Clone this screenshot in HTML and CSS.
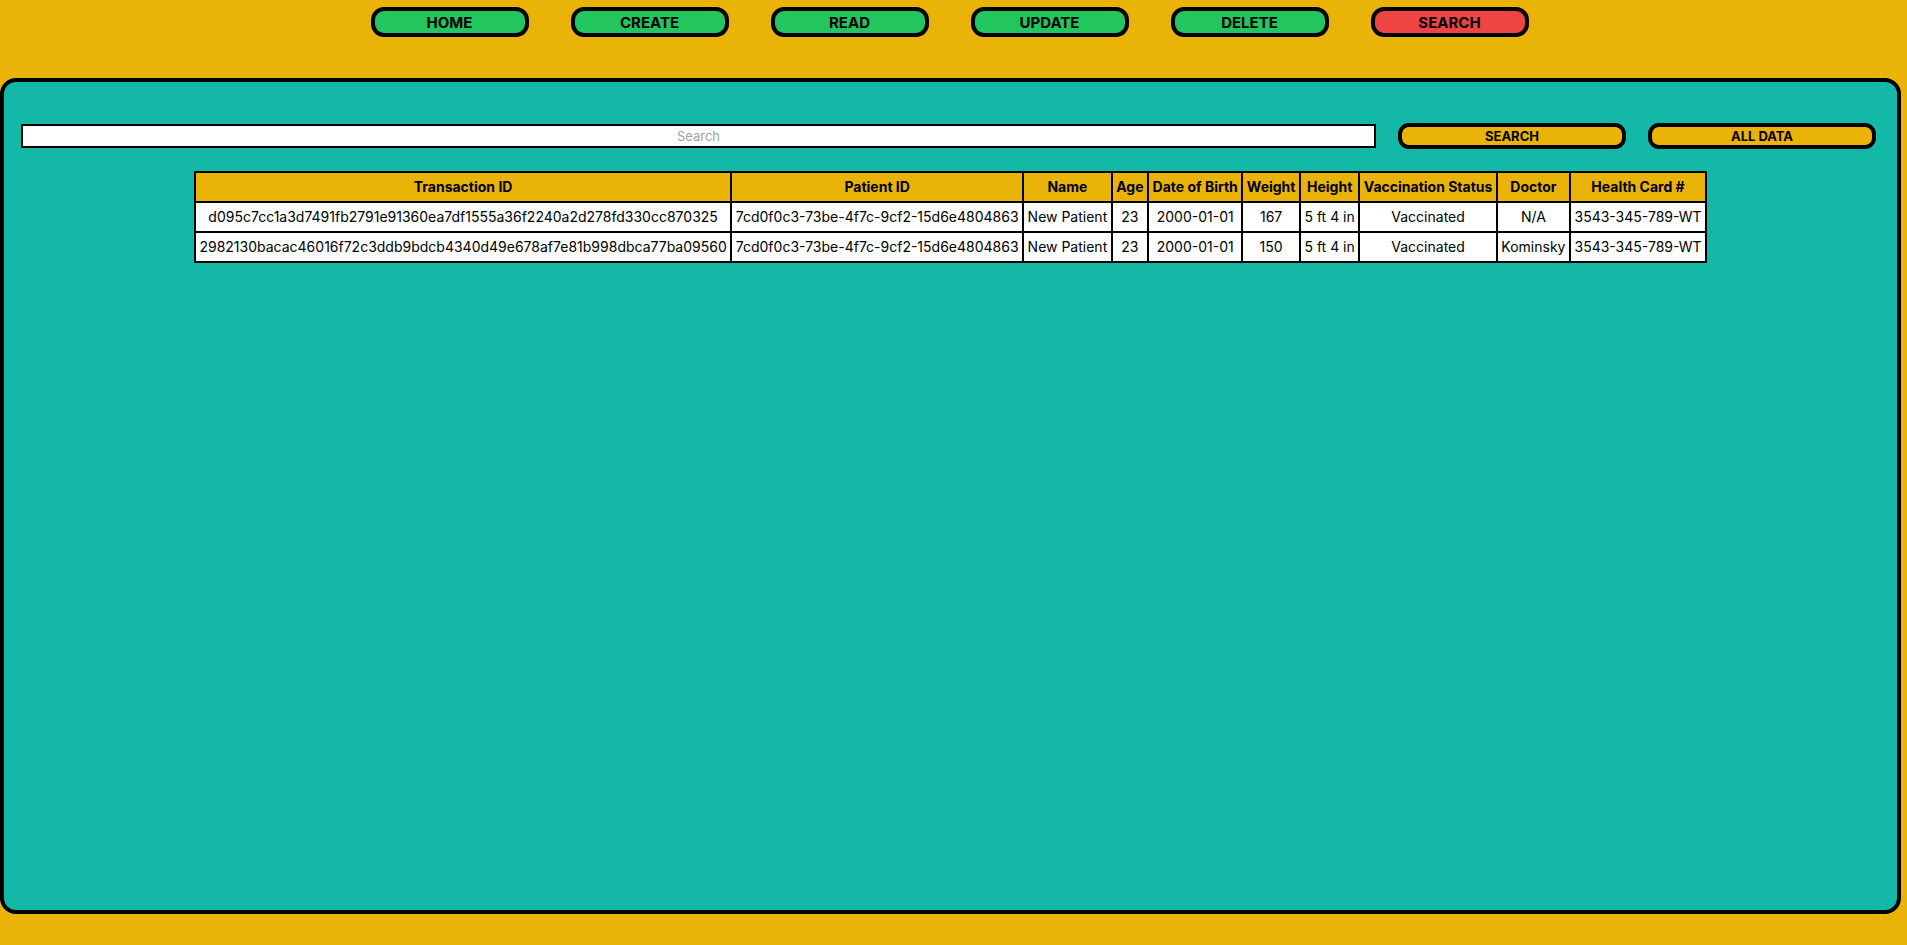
FILE: index.html
```html
<!DOCTYPE html>
<html lang="en">
<head>
<meta charset="utf-8">
<title>Search</title>
<link rel="stylesheet" href="styles.css">
</head>
<body>
<nav class="nav">
  <button class="nav-btn">HOME</button>
  <button class="nav-btn">CREATE</button>
  <button class="nav-btn">READ</button>
  <button class="nav-btn">UPDATE</button>
  <button class="nav-btn">DELETE</button>
  <button class="nav-btn nav-btn-active">SEARCH</button>
</nav>
<main class="panel">
  <div class="search-row">
    <input class="search-input" type="text" placeholder="Search">
    <button class="action-btn">SEARCH</button>
    <button class="action-btn">ALL DATA</button>
  </div>
  <table class="data-table">
    <thead>
      <tr>
        <th>Transaction ID</th>
        <th>Patient ID</th>
        <th>Name</th>
        <th>Age</th>
        <th>Date of Birth</th>
        <th>Weight</th>
        <th>Height</th>
        <th>Vaccination Status</th>
        <th>Doctor</th>
        <th>Health Card #</th>
      </tr>
    </thead>
    <tbody>
      <tr>
        <td>d095c7cc1a3d7491fb2791e91360ea7df1555a36f2240a2d278fd330cc870325</td>
        <td>7cd0f0c3-73be-4f7c-9cf2-15d6e4804863</td>
        <td>New Patient</td>
        <td>23</td>
        <td>2000-01-01</td>
        <td>167</td>
        <td>5 ft 4 in</td>
        <td>Vaccinated</td>
        <td>N/A</td>
        <td>3543-345-789-WT</td>
      </tr>
      <tr>
        <td>2982130bacac46016f72c3ddb9bdcb4340d49e678af7e81b998dbca77ba09560</td>
        <td>7cd0f0c3-73be-4f7c-9cf2-15d6e4804863</td>
        <td>New Patient</td>
        <td>23</td>
        <td>2000-01-01</td>
        <td>150</td>
        <td>5 ft 4 in</td>
        <td>Vaccinated</td>
        <td>Kominsky</td>
        <td>3543-345-789-WT</td>
      </tr>
    </tbody>
  </table>
</main>
</body>
</html>
```
FILE: styles.css
```css
* { box-sizing: border-box; }
html, body { margin: 0; padding: 0; }
body {
  background: #eab308;
  font-family: Inter, "Noto Sans", sans-serif;
  color: #000;
  width: 1907px;
  height: 945px;
  overflow: hidden;
}
.nav {
  display: flex;
  justify-content: center;
  gap: 42px;
  padding-top: 7px;
  padding-right: 8px;
}
.nav-btn {
  width: 158px;
  height: 30px;
  border: 4px solid #000;
  border-radius: 13px;
  background: #22c55e;
  font-family: inherit;
  font-weight: 700;
  font-size: 15px;
  color: #000;
  padding: 0;
  line-height: 1;
}
.nav-btn-active { background: #ef4444; }
.panel {
  margin-top: 41px;
  width: 1901px;
  height: 836px;
  border: 4px solid #000;
  border-radius: 16px;
  background: #14b8a6;
  padding-top: 41px;
}
.search-row {
  display: flex;
  align-items: center;
  gap: 22px;
  padding: 0 21px 0 17px;
}
.search-input {
  flex: 1;
  height: 24px;
  border: 2px solid #000;
  background: #fff;
  text-align: center;
  font-family: inherit;
  font-size: 13px;
  padding: 0;
  outline: none;
}
.search-input::placeholder { color: #9ca3af; }
.action-btn {
  width: 228px;
  height: 26px;
  border: 4px solid #000;
  border-radius: 11px;
  background: #eab308;
  font-family: inherit;
  font-weight: 700;
  font-size: 13px;
  color: #000;
  padding: 0;
  line-height: 1;
}
.data-table {
  margin: 22px auto 0;
  border-collapse: collapse;
  font-size: 14px;
  line-height: 20px;
}
.data-table th, .data-table td {
  border: 2px solid #000;
  padding: 4px 3.5px;
  text-align: center;
  white-space: nowrap;
}
.data-table th {
  background: #eab308;
  font-weight: 700;
  font-size: 14px;
}
.data-table td {
  background: #fff;
  font-weight: 400;
}
```
